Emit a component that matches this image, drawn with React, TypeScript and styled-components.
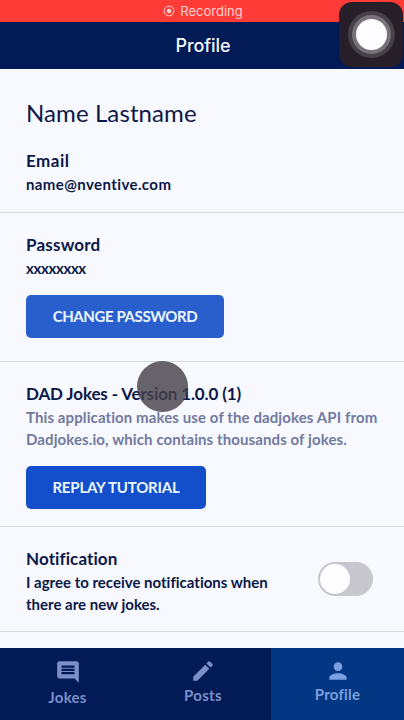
import React from "react";
import styled, { createGlobalStyle } from "styled-components";
import { MdComment, MdEdit, MdPerson } from "react-icons/md";

const GlobalStyle = createGlobalStyle`
  * { box-sizing: border-box; }
  body { margin: 0; overflow: hidden; }
`;

const Screen = styled.div`
  position: relative;
  width: 404px;
  height: 720px;
  display: flex;
  flex-direction: column;
  overflow: hidden;
  background: #f7f9fe;
  color: #0c1848;
  font-family: Lato, "Liberation Sans", sans-serif;
  font-variant-ligatures: none;
`;

const RecordingBar = styled.div`
  flex: none;
  height: 22px;
  display: flex;
  align-items: center;
  justify-content: center;
  gap: 5px;
  padding-left: 2px;
  background: #ff3b37;
  color: #ffd3d0;
  font: 400 13px/22px Inter, sans-serif;
  letter-spacing: 0;
`;

const Header = styled.header`
  flex: none;
  height: 47px;
  padding-left: 2px;
  background: #021a56;
  color: #f3f8ff;
  text-align: center;
  font: 500 18px/47px Inter, sans-serif;
  letter-spacing: -0.1px;
`;

const Content = styled.main`
  flex: 1;
  min-height: 0;
  overflow: hidden;
`;

const Section = styled.section<{ $height: number; $top: number }>`
  height: ${(p) => p.$height}px;
  padding: ${(p) => p.$top}px 26px 0;
  border-bottom: 1px solid #d5d8e3;
`;

const Name = styled.h1<{ $track?: number }>`
  margin: 0 0 21px;
  font-size: 24px;
  font-weight: 400;
  line-height: 30px;
  letter-spacing: ${(p) => p.$track ?? 0}px;
  white-space: nowrap;
`;

const Title = styled.h2<{ $track?: number }>`
  margin: 0;
  font-size: 17px;
  font-weight: 700;
  line-height: 24px;
  letter-spacing: ${(p) => p.$track ?? 0}px;
  white-space: nowrap;
`;

const Line = styled.div<{ $track?: number; $muted?: boolean }>`
  color: ${(p) => (p.$muted ? "#727a9f" : "inherit")};
  font-size: 15px;
  font-weight: 700;
  line-height: 22px;
  letter-spacing: ${(p) => p.$track ?? 0}px;
  white-space: nowrap;
`;

const Button = styled.button<{ $width: number; $color: string; $track?: number }>`
  display: block;
  width: ${(p) => p.$width}px;
  height: 43px;
  margin: 16px 0 0;
  padding: 0;
  border: 0;
  border-radius: 5px;
  background: ${(p) => p.$color};
  color: #edf6ff;
  font: 700 15px/43px Lato, sans-serif;
  letter-spacing: ${(p) => p.$track ?? 0}px;
  white-space: nowrap;
`;

const NotificationRow = styled.div`
  display: flex;
  justify-content: space-between;
`;

const Toggle = styled.div`
  flex: none;
  width: 55px;
  height: 34px;
  margin: 15px 5px 0 0;
  padding: 2px;
  border-radius: 17px;
  background: #c8c7d0;
`;

const Knob = styled.div`
  width: 30px;
  height: 30px;
  border-radius: 50%;
  background: #fefeff;
`;

const TabBar = styled.nav`
  flex: none;
  height: 72px;
  display: grid;
  grid-template-columns: 135px 136px 133px;
  background: #021a56;
`;

const Tab = styled.div<{ $active?: boolean; $gap: number; $top: number }>`
  display: flex;
  flex-direction: column;
  align-items: center;
  gap: ${(p) => p.$gap}px;
  padding-top: ${(p) => p.$top}px;
  background: ${(p) => (p.$active ? "#033783" : "transparent")};
  color: ${(p) => (p.$active ? "#7b9fdf" : "#7b8fc8")};
  font-size: 15px;
  font-weight: 700;
  line-height: 18px;
  svg { display: block; }
`;

const TabLabel = styled.span<{ $track?: number }>`
  letter-spacing: ${(p) => p.$track ?? 0}px;
`;

const TouchDot = styled.div`
  position: absolute;
  left: 137px;
  top: 361px;
  width: 51px;
  height: 51px;
  border-radius: 50%;
  background: rgba(70, 66, 74, 0.82);
`;

const AssistiveTouch = styled.div`
  position: absolute;
  left: 339px;
  top: 2px;
  width: 64px;
  height: 65px;
  display: grid;
  place-items: center;
  border-radius: 13px;
  background: #261e29;
`;

const Rings = styled.div`
  width: 31px;
  height: 31px;
  border-radius: 50%;
  background: #fdfcff;
  box-shadow: 0 0 0 4px #77717c, 0 0 0 8px #464049;
`;

export default function App() {
  return (
    <Screen>
      <GlobalStyle />
      <RecordingBar>
        <svg width="12" height="12" viewBox="0 0 12 12">
          <circle cx="6" cy="6" r="4.9" fill="none" stroke="currentColor" strokeWidth="1" />
          <circle cx="6" cy="6" r="2.3" fill="currentColor" />
        </svg>
        Recording
      </RecordingBar>
      <Header>Profile</Header>
      <Content>
        <Section $height={144} $top={29}>
          <Name $track={0.1}>Name Lastname</Name>
          <Title $track={0.5}>Email</Title>
          <Line $track={0.4}>name@nventive.com</Line>
        </Section>
        <Section $height={149} $top={20}>
          <Title $track={0.2}>Password</Title>
          <Line $track={-0.35}>xxxxxxxx</Line>
          <Button $width={198} $color="#285fcd" $track={-0.4}>CHANGE PASSWORD</Button>
        </Section>
        <Section $height={165} $top={20}>
          <Title $track={-0.14}>DAD Jokes - Version 1.0.0 (1)</Title>
          <Line $muted $track={0.1}>This application makes use of the dadjokes API from</Line>
          <Line $muted $track={0.1}>Dadjokes.io, which contains thousands of jokes.</Line>
          <Button $width={180} $color="#134fcb" $track={-0.2}>REPLAY TUTORIAL</Button>
        </Section>
        <Section $height={105} $top={20}>
          <NotificationRow>
            <div>
              <Title $track={0.1}>Notification</Title>
              <Line>I agree to receive notifications when</Line>
              <Line>there are new jokes.</Line>
            </div>
            <Toggle role="switch" aria-checked="false">
              <Knob />
            </Toggle>
          </NotificationRow>
        </Section>
      </Content>
      <TabBar>
        <Tab $gap={3} $top={11}>
          <MdComment size={26} />
          <TabLabel $track={0.3}>Jokes</TabLabel>
        </Tab>
        <Tab $gap={2} $top={10}>
          <MdEdit size={26} />
          <TabLabel $track={0.3}>Posts</TabLabel>
        </Tab>
        <Tab $active $gap={1} $top={10}>
          <MdPerson size={26} />
          <TabLabel $track={0.2}>Profile</TabLabel>
        </Tab>
      </TabBar>
      <TouchDot />
      <AssistiveTouch>
        <Rings />
      </AssistiveTouch>
    </Screen>
  );
}
